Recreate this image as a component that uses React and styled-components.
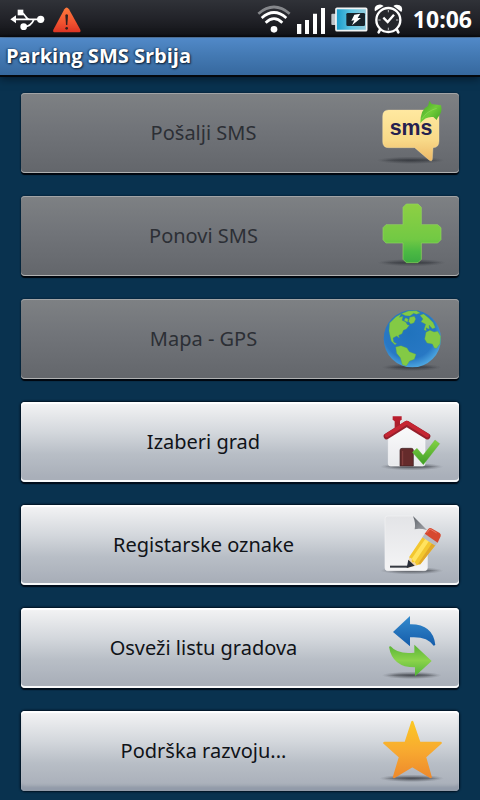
import React from "react";
import styled, { createGlobalStyle, css } from "styled-components";

const GlobalStyle = createGlobalStyle`
  *, *::before, *::after { box-sizing: border-box; }
  body {
    margin: 0;
    background: #09324f;
    font-family: "Noto Sans", "Open Sans", sans-serif;
  }
`;

const Screen = styled.div`
  min-height: 100vh;
  display: flex;
  flex-direction: column;
`;

const StatusBar = styled.header`
  display: flex;
  align-items: center;
  justify-content: space-between;
  height: 38px;
  padding: 0 8px 0 10px;
  background: linear-gradient(#303238, #222329 50%, #141519 92%, #08090b);
  border-bottom: 1px solid #5d83ac;
`;

const StatusGroup = styled.div`
  display: flex;
  align-items: center;
  gap: 6px;
`;

const StatusIcon = styled.svg`
  display: block;
  flex: none;
  width: ${(p) => p.$width}px;
  height: 36px;
`;

const Clock = styled.time`
  margin-left: 3px;
  color: #fff;
  font-family: "Open Sans", sans-serif;
  font-size: 23px;
  font-weight: 700;
  line-height: 36px;
`;

const TitleBar = styled.div`
  height: 39px;
  padding: 0 6px;
  background: linear-gradient(#5189c8, #447ab4 45%, #36689e);
  border-bottom: 2px solid #04080d;
  box-shadow: 0 2px 8px rgba(0, 10, 22, 0.6);
`;

const Title = styled.h1`
  margin: 0;
  color: #fff;
  font-family: "Open Sans", sans-serif;
  font-size: 20px;
  font-weight: 700;
  line-height: 36px;
  text-shadow: 1px 1px 2px #0b1d33, -1px 0 2px #1a3555;
`;

const Menu = styled.main`
  display: flex;
  flex-direction: column;
  gap: 23px;
  padding: 16px 21px 9px;
`;

const enabledLook = css`
  color: #101318;
  background: linear-gradient(#f4f4f5, #d3d7dc 38%, #b8bec6 65%, #a9afb9 94%, #a9afb9);
  box-shadow: inset 0 2px 1px #fff, inset 0 -2px 0 #f8f9fa, 0 0 2px 1px #00101f, 0 2px 1px #000a17;
`;

const disabledLook = css`
  color: #2c2f35;
  background: linear-gradient(#7e8184, #717479 45%, #63666b);
  box-shadow: inset 0 1px 0 #a2a4a6, inset 0 -1px 0 #b0b1b2, 0 0 2px #00101f, 0 2px 1px #000409;
`;

const MenuButton = styled.button`
  display: flex;
  align-items: center;
  gap: 9px;
  width: 100%;
  height: 80px;
  padding: 0 15px;
  border: 0;
  border-radius: 4px;
  font-family: inherit;
  font-size: 20px;
  line-height: 28px;
  ${(p) => (p.disabled ? disabledLook : enabledLook)}

  &:last-child {
    box-shadow: inset 0 2px 1px #fff, inset 0 -6px 3px -1px #929ba9, 0 0 2px 1px #00101f;
  }
`;

const Label = styled.span`
  flex: 1;
  text-align: center;
`;

const Picture = styled.svg`
  display: block;
  flex: none;
  width: 64px;
  height: 64px;
  overflow: visible;
`;

function Shadow({ cx = 155, cy, rx = 98 }) {
  return (
    <>
      <ellipse cx={cx} cy={cy} rx={rx} ry="11" fill="url(#ground)" />
      <ellipse cx={cx} cy={cy} rx={rx - 12} ry="5" fill="url(#ground)" />
    </>
  );
}

function SharedPaints() {
  return (
    <defs>
      <radialGradient id="ground">
        <stop offset="0" stopColor="#2b2e34" stopOpacity="0.5" />
        <stop offset="0.6" stopColor="#2b2e34" stopOpacity="0.3" />
        <stop offset="1" stopColor="#2b2e34" stopOpacity="0" />
      </radialGradient>
    </defs>
  );
}

function SmsIcon() {
  return (
    <Picture viewBox="60 48 192 192" aria-hidden="true">
      <SharedPaints />
      <defs>
        <linearGradient id="bubble" x1="0" y1="0" x2="0" y2="1">
          <stop offset="0" stopColor="#ffe9a0" />
          <stop offset="0.6" stopColor="#f8d988" />
          <stop offset="1" stopColor="#edb867" />
        </linearGradient>
        <linearGradient id="leaf" x1="0" y1="0" x2="1" y2="1">
          <stop offset="0" stopColor="#3d9c25" />
          <stop offset="0.5" stopColor="#70cc38" />
          <stop offset="1" stopColor="#3c9e24" />
        </linearGradient>
      </defs>
      <Shadow cy={226} rx={102} cx={152} />
      <path d="M86 75H218Q237 75 237 94V168Q237 188 219 188L217 223Q216 231 207 225L164 188H86Q68 188 68 170V94Q68 75 86 75Z" fill="url(#bubble)" stroke="#ffe9ad" strokeWidth="1" />
      <text x="153" y="151" textAnchor="middle" fontFamily="Liberation Sans, sans-serif" fontSize="64" fontWeight="700" fill="#25204f">sms</text>
      <path d="M181 115Q181 72 204 63L208 47L215 57L243 61Q249 81 233 98L230 105L220 96Q197 93 181 115Z" fill="url(#leaf)" />
      <path d="M186 102Q200 78 230 70" fill="none" stroke="#84d64c" strokeWidth="3" />
    </Picture>
  );
}

function PlusIcon() {
  return (
    <Picture viewBox="60 42 192 192" aria-hidden="true">
      <defs>
        <linearGradient id="plus" x1="0" y1="0" x2="0" y2="1">
          <stop offset="0" stopColor="#8ed044" />
          <stop offset="0.6" stopColor="#72c944" />
          <stop offset="0.8" stopColor="#4dba43" />
          <stop offset="1" stopColor="#3cab42" />
        </linearGradient>
      </defs>
      <Shadow cy={218} rx={103} />
      <path d="M139 42H174L184 52V104H233L243 113V149L233 159H184V208L174 218H139L129 208V159H78L69 149V113L78 104H129V52Z" fill="url(#plus)" stroke="#92d65e" strokeWidth="2" />
    </Picture>
  );
}

function GlobeIcon() {
  return (
    <Picture viewBox="60 51 192 192" aria-hidden="true">
      <defs>
        <radialGradient id="sea" cx="0.45" cy="0.4" r="0.6">
          <stop offset="0" stopColor="#2073bd" />
          <stop offset="0.75" stopColor="#2878c4" />
          <stop offset="1" stopColor="#4ba4df" />
        </radialGradient>
      </defs>
      <Shadow cy={232} rx={90} />
      <circle cx="157" cy="146" r="86" fill="url(#sea)" />
      <g fill="#83ca45" stroke="#4f9f58" strokeWidth="1">
        <path d="M89 99L108 80L123 72L118 82L129 79L126 91L137 96L142 104L148 106L139 117L130 121L126 131L116 136L118 144L110 138L99 144L101 156L110 161L105 164L94 154L90 137L87 122Z" />
        <path d="M124 71L145 63L169 62L181 69L169 73L161 70L150 78L137 77Z" />
        <path d="M149 82L163 79L167 87L162 98L152 102L146 94Z" />
        <path d="M137 83L145 88L142 97L132 91Z" />
        <path d="M107 171L123 167L141 174L148 185L168 193L163 208L149 213L139 228L127 224L121 203L110 190Z" />
        <path d="M180 76L191 72L206 84L220 98L226 113L217 116L207 105L208 118L198 113L199 123L192 119L197 103L183 95L189 87Z" />
        <path d="M198 127L210 121L222 126L233 124L242 139L240 161L230 175L223 174L217 162L201 159L194 147Z" />
      </g>
    </Picture>
  );
}

function HouseIcon() {
  return (
    <Picture viewBox="60 45 192 192" aria-hidden="true">
      <defs>
        <linearGradient id="tick" x1="0" y1="0" x2="0" y2="1">
          <stop offset="0" stopColor="#83d343" />
          <stop offset="1" stopColor="#3f9e27" />
        </linearGradient>
        <linearGradient id="wall" x1="0" y1="0" x2="0" y2="1">
          <stop offset="0" stopColor="#fbfbfc" />
          <stop offset="1" stopColor="#e8e9ec" />
        </linearGradient>
      </defs>
      <Shadow cy={215} rx={95} />
      <path d="M85 128L140 91L195 128V206Q195 213 188 213H92Q85 213 85 206Z" fill="url(#wall)" stroke="#f8f8f9" strokeWidth="2" />
      <path d="M120 213V166Q120 160 126 160H154Q160 160 160 166V213Z" fill="#652b2b" stroke="#391f22" strokeWidth="2" />
      <path d="M128 168V211" stroke="#884240" strokeWidth="3" />
      <path d="M104 78H120V100L104 109Z" fill="#ac1f2c" />
      <path d="M98 64H125V73Q122 80 112 80Q101 80 98 73Z" fill="#b81d2c" />
      <path d="M80 124L140 86L202 124" fill="none" stroke="#95202c" strokeWidth="18" strokeLinecap="round" strokeLinejoin="round" />
      <path d="M80 121L140 83L202 121" fill="none" stroke="#c62633" strokeWidth="11" strokeLinecap="round" strokeLinejoin="round" />
      <path d="M157 172L171 160L189 181L225 135L239 146L190 209Z" fill="url(#tick)" stroke="#65b73c" strokeWidth="1" />
    </Picture>
  );
}

function PencilIcon() {
  return (
    <Picture viewBox="60 45 192 192" aria-hidden="true">
      <defs>
        <linearGradient id="sheet" x1="0" y1="0" x2="0" y2="1">
          <stop offset="0" stopColor="#e3e4e7" />
          <stop offset="1" stopColor="#f4f4f5" />
        </linearGradient>
        <linearGradient id="fold" x1="0" y1="0" x2="1" y2="1">
          <stop offset="0" stopColor="#5e636a" />
          <stop offset="1" stopColor="#a4a6ab" />
        </linearGradient>
      </defs>
      <Shadow cy={218} rx={95} />
      <path d="M83 54H159L202 97V210Q202 218 193 218H83Q75 218 75 209V62Q75 54 83 54Z" fill="url(#sheet)" stroke="#f3f3f4" strokeWidth="2" />
      <path d="M159 54L202 97Q180 90 164 94Q168 76 159 54Z" fill="url(#fold)" />
      <path d="M90 206H147" stroke="#353941" strokeWidth="6" />
      <path d="M143 210L148 177L172 202Z" fill="#f0d5aa" />
      <path d="M140 210L145 185L164 203Z" fill="#282d38" />
      <path d="M147 178L188 117L226 142L181 199L170 202L164 193L156 193L155 182Z" fill="#f3c72f" />
      <path d="M155 182L196 122L207 129L164 193Z" fill="#ffe35f" />
      <path d="M174 198L216 136L226 142L181 199Z" fill="#e1a82a" />
      <path d="M187 118L194 107L234 132L226 143Z" fill="#b8bcc2" />
      <path d="M194 107L205 93Q208 89 214 91L239 105Q244 109 242 115L233 134Z" fill="#d6492f" />
      <path d="M201 104L210 93L230 105" fill="none" stroke="#eb7660" strokeWidth="3" />
    </Picture>
  );
}

function RefreshIcon() {
  return (
    <Picture viewBox="60 48 192 192" aria-hidden="true">
      <defs>
        <linearGradient id="back" x1="0" y1="0" x2="0" y2="1">
          <stop offset="0" stopColor="#348bce" />
          <stop offset="1" stopColor="#145ba9" />
        </linearGradient>
        <linearGradient id="forth" x1="0" y1="0" x2="0" y2="1">
          <stop offset="0" stopColor="#58b336" />
          <stop offset="0.5" stopColor="#8bd34b" />
          <stop offset="1" stopColor="#50b13a" />
        </linearGradient>
      </defs>
      <Shadow cy={226} rx={90} />
      <path d="M99 96L150 48V73Q219 72 226 135L221 137Q201 108 150 112V139Z" fill="url(#back)" />
      <path d="M87 140L92 139Q113 164 163 158V134L215 183L165 229V202Q97 202 87 140Z" fill="url(#forth)" />
    </Picture>
  );
}

function StarIcon() {
  return (
    <Picture viewBox="60 57 192 192" aria-hidden="true">
      <defs>
        <linearGradient id="star" x1="0" y1="0" x2="0" y2="1">
          <stop offset="0" stopColor="#fbc725" />
          <stop offset="0.5" stopColor="#f8ab30" />
          <stop offset="1" stopColor="#ee8a2c" />
        </linearGradient>
      </defs>
      <Shadow cy={235} rx={97} />
      <path d="M157 66L178 128L242 129L195 171L212 231L157 198L102 231L120 171L73 129L137 128Z" fill="url(#star)" stroke="url(#star)" strokeWidth="7" strokeLinejoin="round" />
    </Picture>
  );
}

function UsbIcon() {
  return (
    <StatusIcon $width={36} viewBox="32 0 108 108" role="img" aria-label="USB">
      <path d="M45 55H120M63 34C77 34 78 55 91 55M74 77C91 77 98 69 104 55" fill="none" stroke="#fff" strokeWidth="5" />
      <path d="M33 55L50 43V67Z" fill="#fff" />
      <rect x="55" y="26" width="17" height="17" fill="#fff" />
      <circle cx="73" cy="77" r="10" fill="#fff" />
      <circle cx="124" cy="55" r="11" fill="#fff" />
    </StatusIcon>
  );
}

function WarningIcon() {
  return (
    <StatusIcon $width={30} viewBox="154 0 90 108" role="img" aria-label="Warning">
      <defs>
        <linearGradient id="warn" x1="0" y1="0" x2="0" y2="1">
          <stop offset="0" stopColor="#ff7a3c" />
          <stop offset="0.6" stopColor="#f15330" />
          <stop offset="1" stopColor="#dd3524" />
        </linearGradient>
      </defs>
      <path d="M191 25Q198 14 205 25L239 86Q242 94 233 94H164Q155 94 158 86Z" fill="url(#warn)" />
      <path d="M194 42Q198 37 202 42L200 72H196Z" fill="#30201f" />
      <circle cx="198" cy="82" r="4" fill="#30201f" />
    </StatusIcon>
  );
}

function WifiIcon() {
  return (
    <StatusIcon $width={34} viewBox="47 0 102 108" role="img" aria-label="Wi-Fi">
      <g fill="none" strokeWidth="8">
        <path d="M51 38Q98 -2 145 38" stroke="#85878b" />
        <path d="M61 51Q98 18 135 51" stroke="#fff" />
        <path d="M73 65Q98 41 123 65" stroke="#fff" />
      </g>
      <circle cx="98" cy="85" r="10" fill="#fff" />
    </StatusIcon>
  );
}

function SignalIcon() {
  return (
    <StatusIcon $width={28} viewBox="171 0 84 108" role="img" aria-label="Signal">
      <path d="M171 69H184V99H171ZM195 57H207V99H195ZM219 38H231V99H219ZM243 21H255V99H243Z" fill="#fff" />
    </StatusIcon>
  );
}

function BatteryIcon() {
  return (
    <StatusIcon $width={37} viewBox="272 0 111 108" role="img" aria-label="Charging">
      <defs>
        <linearGradient id="cell" x1="0" y1="0" x2="1" y2="0">
          <stop offset="0" stopColor="#179bcb" />
          <stop offset="0.5" stopColor="#60c5e3" />
          <stop offset="1" stopColor="#95ccdd" />
        </linearGradient>
      </defs>
      <rect x="273" y="38" width="14" height="34" rx="3" fill="#bec4c9" />
      <rect x="287" y="22" width="92" height="67" rx="3" fill="url(#cell)" stroke="#f3f5f6" strokeWidth="5" />
      <rect x="318" y="36" width="56" height="39" rx="4" fill="#18232b" />
      <path d="M342 41L360 38L352 51H362L335 73L342 58L333 59Z" fill="#fff" />
    </StatusIcon>
  );
}

function AlarmIcon() {
  return (
    <StatusIcon $width={30} viewBox="399 0 90 108" role="img" aria-label="Alarm">
      <path d="M402 31Q397 14 413 11Q422 9 428 15ZM457 15Q465 8 476 13Q488 19 481 33Z" fill="#fff" />
      <path d="M418 84L413 94M467 84L472 94" stroke="#fff" strokeWidth="8" strokeLinecap="round" />
      <circle cx="442" cy="57" r="36" fill="#25272c" stroke="#fff" strokeWidth="7" />
      <path d="M427 50L440 63L459 41" fill="none" stroke="#fff" strokeWidth="7" />
      <path d="M442 27V34M442 80V87M412 57H419M465 57H472" stroke="#b9bbbe" strokeWidth="3" />
    </StatusIcon>
  );
}

const actions = [
  { label: "Pošalji SMS", Icon: SmsIcon, disabled: true },
  { label: "Ponovi SMS", Icon: PlusIcon, disabled: true },
  { label: "Mapa - GPS", Icon: GlobeIcon, disabled: true },
  { label: "Izaberi grad", Icon: HouseIcon },
  { label: "Registarske oznake", Icon: PencilIcon },
  { label: "Osveži listu gradova", Icon: RefreshIcon },
  { label: "Podrška razvoju...", Icon: StarIcon },
];

export default function App() {
  return (
    <Screen>
      <GlobalStyle />
      <StatusBar>
        <StatusGroup>
          <UsbIcon />
          <WarningIcon />
        </StatusGroup>
        <StatusGroup>
          <WifiIcon />
          <SignalIcon />
          <BatteryIcon />
          <AlarmIcon />
          <Clock>10:06</Clock>
        </StatusGroup>
      </StatusBar>
      <TitleBar>
        <Title>Parking SMS Srbija</Title>
      </TitleBar>
      <Menu>
        {actions.map(({ label, Icon, disabled }) => (
          <MenuButton key={label} type="button" disabled={disabled}>
            <Label>{label}</Label>
            <Icon />
          </MenuButton>
        ))}
      </Menu>
    </Screen>
  );
}
